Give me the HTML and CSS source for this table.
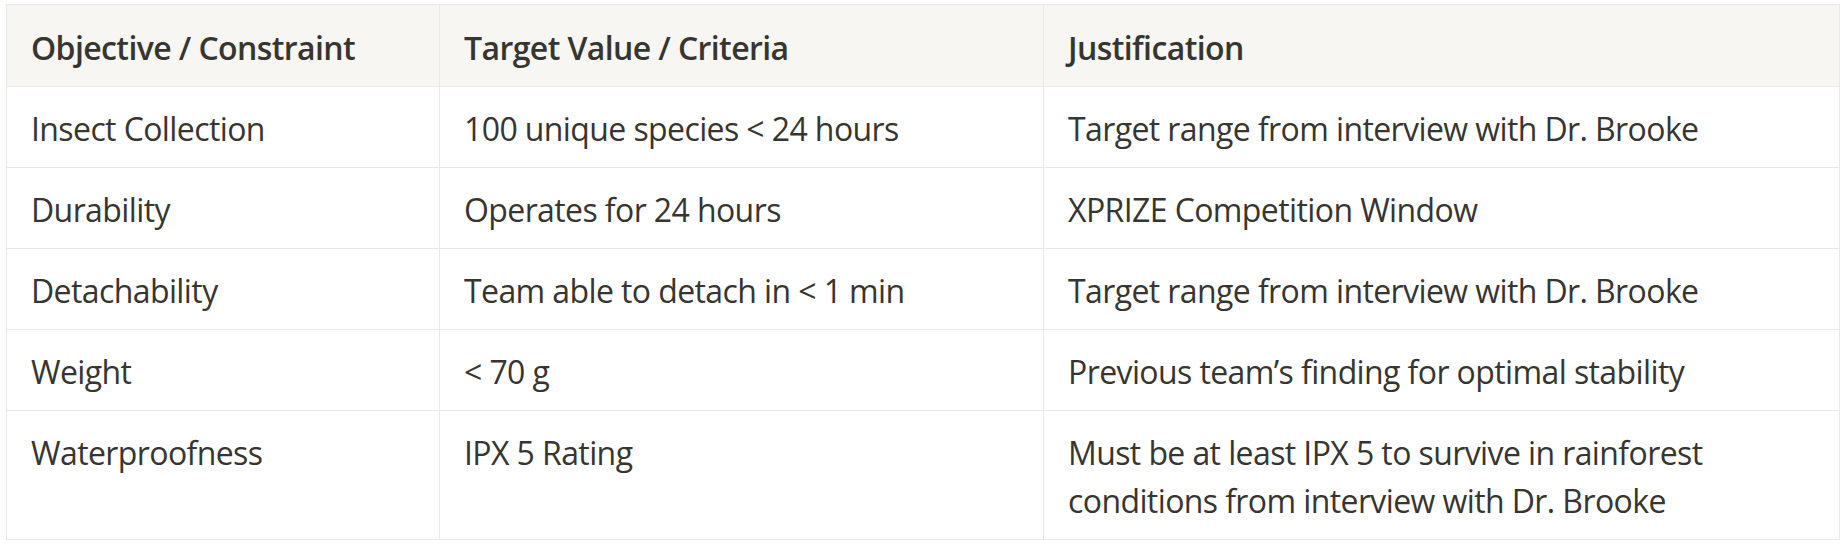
FILE: index.html
```html
<!DOCTYPE html>
<html lang="en">
<head>
<meta charset="utf-8">
<title>Objectives and Constraints</title>
<link rel="stylesheet" href="styles.css">
</head>
<body>
<div class="wrap">
  <table class="spec">
    <colgroup>
      <col class="c1">
      <col class="c2">
      <col class="c3">
    </colgroup>
    <thead>
      <tr>
        <th>Objective / Constraint</th>
        <th>Target Value / Criteria</th>
        <th>Justification</th>
      </tr>
    </thead>
    <tbody>
      <tr>
        <td>Insect Collection</td>
        <td>100 unique species &lt; 24 hours</td>
        <td>Target range from interview with Dr. Brooke</td>
      </tr>
      <tr>
        <td>Durability</td>
        <td>Operates for 24 hours</td>
        <td>XPRIZE Competition Window</td>
      </tr>
      <tr>
        <td>Detachability</td>
        <td>Team able to detach in &lt; 1 min</td>
        <td>Target range from interview with Dr. Brooke</td>
      </tr>
      <tr>
        <td>Weight</td>
        <td>&lt; 70 g</td>
        <td>Previous team’s finding for optimal stability</td>
      </tr>
      <tr>
        <td>Waterproofness</td>
        <td>IPX 5 Rating</td>
        <td>Must be at least IPX 5 to survive in rainforest conditions from interview with Dr. Brooke</td>
      </tr>
    </tbody>
  </table>
</div>
</body>
</html>
```

FILE: styles.css
```css
html, body {
  margin: 0;
  padding: 0;
  background: #ffffff;
}

.wrap {
  padding: 4px 0 0 6px;
}

.spec {
  width: 1833px;
  table-layout: fixed;
  border-collapse: collapse;
  font-family: "Open Sans", "Noto Sans", sans-serif;
  font-size: 32px;
  letter-spacing: -0.6px;
  line-height: 48px;
  color: #37352f;
}

.c1 { width: 433px; }
.c2 { width: 604px; }
.c3 { width: 796px; }

.spec th,
.spec td {
  border: 1px solid #e9e9e7;
  padding: 18px 24px 14px;
  text-align: left;
  vertical-align: top;
}

.spec th {
  background: #f7f6f3;
  font-weight: 600;
  padding-top: 19px;
}

.spec td {
  font-weight: 400;
}
```
